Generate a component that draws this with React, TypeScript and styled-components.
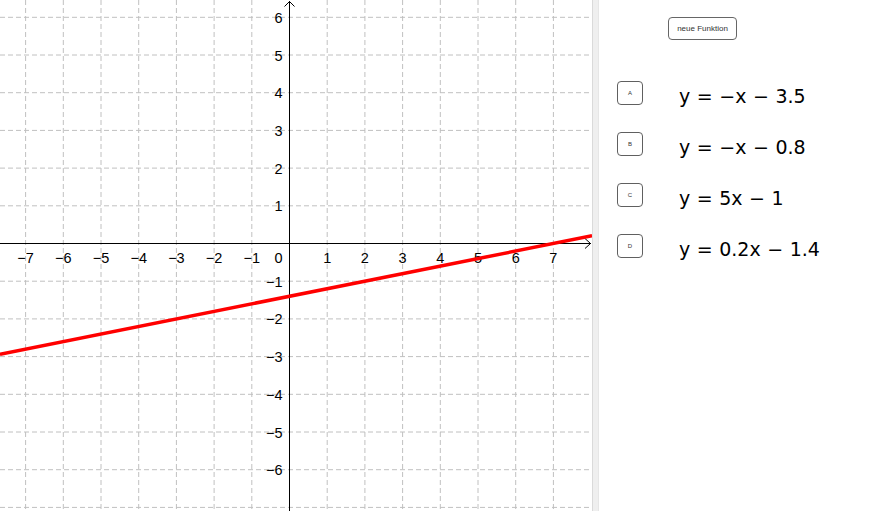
import React from 'react';
import styled, { createGlobalStyle } from 'styled-components';

const GlobalStyle = createGlobalStyle`
  html, body {
    margin: 0;
    padding: 0;
    background: #fff;
    overflow: hidden;
  }
`;

const Page = styled.div`
  display: flex;
  width: 877px;
  height: 511px;
  background: #fff;
  font-family: 'Liberation Sans', Arial, sans-serif;
`;

const GraphPanel = styled.div`
  width: 592px;
  height: 511px;
  flex-shrink: 0;
  overflow: hidden;

  svg {
    display: block;
  }
`;

const Divider = styled.div`
  width: 5px;
  flex-shrink: 0;
  background: #efefef;
  border-left: 1px solid #dadada;
  border-right: 1px solid #e6e6e6;
`;

const SidePanel = styled.div`
  flex: 1;
  display: flex;
  flex-direction: column;
  align-items: flex-start;
  padding: 17px 0 0 18px;
`;

const NewButton = styled.button`
  width: 69px;
  height: 23px;
  margin-left: 51px;
  padding: 0;
  background: #fff;
  border: 1px solid #666;
  border-radius: 4px;
  font-family: 'Liberation Sans', Arial, sans-serif;
  font-size: 8px;
  color: #333;
`;

const Rows = styled.div`
  display: grid;
  row-gap: 27px;
  margin-top: 41px;
`;

const Row = styled.div`
  display: flex;
  align-items: center;
  height: 24px;
`;

const KeyBox = styled.button`
  width: 26px;
  height: 24px;
  padding: 0;
  background: #fff;
  border: 1px solid #606060;
  border-radius: 4px;
  font-family: 'Liberation Sans', Arial, sans-serif;
  font-size: 6px;
  color: #333;
`;

const Equation = styled.span`
  margin-left: 36px;
  margin-top: 5px;
  font-family: 'DejaVu Sans', sans-serif;
  font-size: 19px;
  word-spacing: 0.5px;
  color: #000;
  white-space: nowrap;
`;

// graph geometry
const W = 592;
const H = 511;
const OX = 289.5;
const OY = 243.5;
const U = 37.7;

const toPx = (x: number) => OX + x * U;
const toPy = (y: number) => OY - y * U;

const fmt = (n: number) => (n < 0 ? `\u2212${-n}` : `${n}`);

const xs = [-7, -6, -5, -4, -3, -2, -1, 1, 2, 3, 4, 5, 6, 7];
const ys = [-7, -6, -5, -4, -3, -2, -1, 1, 2, 3, 4, 5, 6];

const functions = [
  { key: 'A', text: 'y = \u2212x \u2212 3.5' },
  { key: 'B', text: 'y = \u2212x \u2212 0.8' },
  { key: 'C', text: 'y = 5x \u2212 1' },
  { key: 'D', text: 'y = 0.2x \u2212 1.4' },
];

const Graph: React.FC = () => {
  const f = (x: number) => 0.2 * x - 1.4;
  const x0 = (0 - OX) / U;
  const x1 = (W - OX) / U;

  return (
    <svg width={W} height={H} viewBox={`0 0 ${W} ${H}`}>
      <g stroke="#c0c0c0" strokeWidth={1} strokeDasharray="5 3">
        {xs.map(k => (
          <line key={`v${k}`} x1={toPx(k)} y1={0} x2={toPx(k)} y2={H} />
        ))}
        {ys.map(k => (
          <line key={`h${k}`} x1={0} y1={toPy(k)} x2={W} y2={toPy(k)} />
        ))}
      </g>

      <g stroke="#000" strokeWidth={1} fill="none">
        <line x1={0} y1={OY} x2={W - 1} y2={OY} />
        <line x1={OX} y1={H} x2={OX} y2={1} />
        <polyline points={`${W - 7},${OY - 5} ${W - 1.5},${OY} ${W - 7},${OY + 5}`} />
        <polyline points={`${OX - 5},${6.5} ${OX},${1.5} ${OX + 5},${6.5}`} />
      </g>

      <g fontFamily="'Liberation Sans', Arial, sans-serif" fontSize={14.5} fill="#000">
        {xs.map(k => (
          <text key={`xl${k}`} x={toPx(k)} y={262.5} textAnchor="middle">
            {fmt(k)}
          </text>
        ))}
        <text x={282.5} y={262.5} textAnchor="end">0</text>
        {ys.filter(k => k > -7).map(k => (
          <text key={`yl${k}`} x={282.5} y={toPy(k) + 5.5} textAnchor="end">
            {fmt(k)}
          </text>
        ))}
      </g>

      <line
        x1={toPx(x0)}
        y1={toPy(f(x0))}
        x2={toPx(x1)}
        y2={toPy(f(x1))}
        stroke="#ff0000"
        strokeWidth={3.5}
      />
    </svg>
  );
};

const App: React.FC = () => {
  return (
    <>
      <GlobalStyle />
      <Page>
        <GraphPanel>
          <Graph />
        </GraphPanel>
        <Divider />
        <SidePanel>
          <NewButton>neue Funktion</NewButton>
          <Rows>
            {functions.map(fn => (
              <Row key={fn.key}>
                <KeyBox>{fn.key}</KeyBox>
                <Equation>{fn.text}</Equation>
              </Row>
            ))}
          </Rows>
        </SidePanel>
      </Page>
    </>
  );
};

export default App;
